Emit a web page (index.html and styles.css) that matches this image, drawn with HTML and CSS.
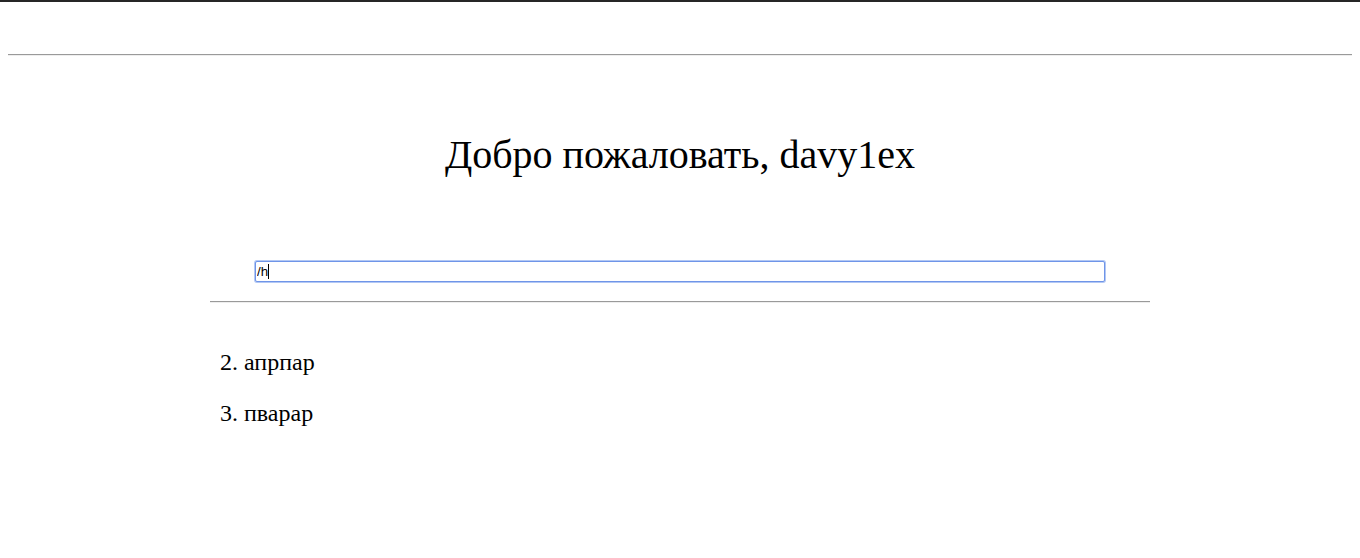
FILE: index.html
```html
<!DOCTYPE html>
<html lang="ru">
<head>
<meta charset="utf-8">
<title>Главная</title>
<link rel="stylesheet" href="styles.css">
</head>
<body class="page">
<div class="topbar"></div>
<div class="wrap">
  <hr class="rule-top">
  <h1 class="title">Добро пожаловать, davy1ex</h1>
  <main class="content">
    <form class="search">
      <div class="search-box">
        <input class="search-input" type="text" value="/h">
        <span class="caret"></span>
      </div>
    </form>
    <hr class="rule-mid">
    <ol class="items" start="2">
      <li class="item">апрпар</li>
      <li class="item">пварар</li>
    </ol>
  </main>
</div>
</body>
</html>
```

FILE: styles.css
```css
.page {
  margin: 0;
  background: #fff;
  font-family: "Liberation Serif", "Times New Roman", serif;
  color: #000;
}
.topbar {
  height: 2px;
  background: #262626;
}
.wrap {
  padding: 0 8px;
}
.rule-top {
  margin: 52px 0 0;
  border: none;
  border-top: 1px solid #9a9a9a;
  border-bottom: 1px solid #eeeeee;
  height: 0;
}
.title {
  margin: 76px 0 0;
  font-size: 40px;
  font-weight: normal;
  text-align: center;
  line-height: 46px;
}
.content {
  width: 940px;
  margin: 83px auto 0;
}
.search {
  display: flex;
  justify-content: center;
  margin: 0;
}
.search-box {
  position: relative;
  width: 850px;
  height: 21px;
}
.search-input {
  display: block;
  box-sizing: border-box;
  width: 850px;
  height: 21px;
  margin: 0;
  padding: 1px 1px;
  font-family: "Liberation Sans", Arial, sans-serif;
  font-size: 13.33px;
  color: #000;
  border: 1px solid #6f95e8;
  border-radius: 2px;
  box-shadow: 0 0 0 1px #b3c8f4;
  outline: none;
}
.caret {
  position: absolute;
  left: 13px;
  top: 3px;
  width: 1px;
  height: 15px;
  background: #000;
}
.rule-mid {
  margin: 19px 0 0;
  border: none;
  border-top: 1px solid #9a9a9a;
  border-bottom: 1px solid #eeeeee;
  height: 0;
}
.items {
  margin: 46px 0 0;
  padding: 0 0 0 34px;
  font-size: 24px;
  line-height: 27px;
}
.item {
  margin: 0 0 24px;
}
```
